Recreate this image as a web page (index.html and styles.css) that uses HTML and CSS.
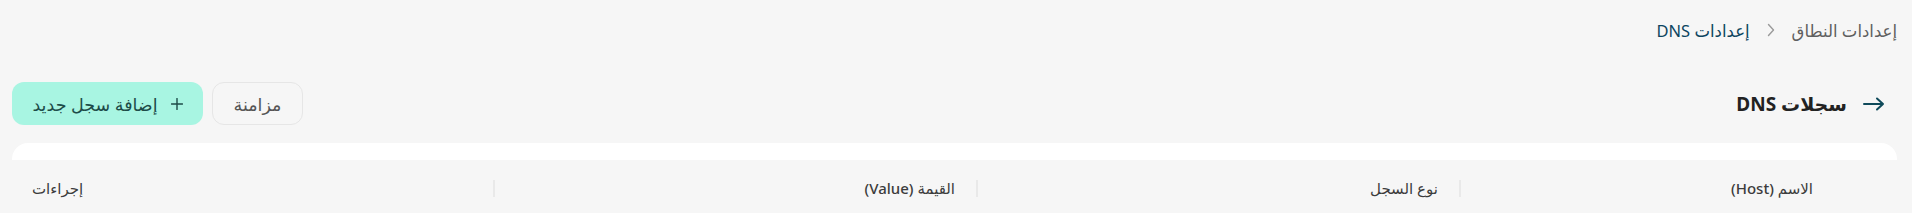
FILE: index.html
```html
<!DOCTYPE html>
<html lang="ar" dir="rtl">
<head>
<meta charset="utf-8">
<title>سجلات DNS</title>
<link rel="stylesheet" href="styles.css">
</head>
<body>
<div class="page">
  <nav class="breadcrumb">
    <span class="crumb">إعدادات النطاق</span>
    <svg class="sep" width="8" height="14" viewBox="0 0 8 14"><path d="M1.5 1.5 L6.5 7 L1.5 12.5" fill="none" stroke="#9a9a9a" stroke-width="1.4" stroke-linecap="round" stroke-linejoin="round"/></svg>
    <span class="crumb current">إعدادات DNS</span>
  </nav>

  <div class="title-row">
    <div class="title">
      <svg class="back" width="22" height="14" viewBox="0 0 22 14"><path d="M1 7 H20 M14 1.5 L20 7 L14 12.5" fill="none" stroke="#0f4a5a" stroke-width="2" stroke-linecap="round" stroke-linejoin="round"/></svg>
      <h1>سجلات DNS</h1>
    </div>
    <div class="actions">
      <button class="btn btn-sync">مزامنة</button>
      <button class="btn btn-add">
        <svg width="12" height="12" viewBox="0 0 12 12"><path d="M6 0.5 V11.5 M0.5 6 H11.5" stroke="#1d4b48" stroke-width="1.4" stroke-linecap="round"/></svg>
        <span>إضافة سجل جديد</span>
      </button>
    </div>
  </div>

  <div class="card">
    <div class="thead">
      <div class="th th-select"></div>
      <div class="th th-host">الاسم (Host)</div>
      <div class="th sepd">نوع السجل</div>
      <div class="th sepd">القيمة (Value)</div>
      <div class="th sepd th-actions">إجراءات</div>
    </div>
  </div>
</div>
</body>
</html>
```
FILE: styles.css
```css
* { box-sizing: border-box; }
html, body {
  margin: 0;
  background: #f6f6f6;
  font-family: "Noto Sans", "DejaVu Sans", sans-serif;
  color: #333;
}
.page {
  padding: 0 15px 0 12px;
}
.breadcrumb {
  display: flex;
  align-items: center;
  gap: 17px;
  height: 20px;
  margin-top: 20px;
  font-size: 16.5px;
}
.crumb { color: #5f5f5f; }
.crumb.current { color: #0d4560; }
.sep { display: block; }

.title-row {
  display: flex;
  justify-content: space-between;
  align-items: center;
  height: 43px;
  margin-top: 42px;
}
.title {
  display: flex;
  align-items: center;
  gap: 16px;
  padding-right: 12px;
}
.title h1 {
  margin: 0;
  font-size: 19px;
  font-weight: 700;
  color: #222;
}
.back { display: block; }
.actions {
  display: flex;
  gap: 9px;
  height: 43px;
}
.btn {
  font-family: inherit;
  font-size: 17.5px;
  border-radius: 12px;
  height: 43px;
  display: flex;
  align-items: center;
  cursor: pointer;
}
.btn-sync {
  width: 91px;
  justify-content: center;
  background: transparent;
  border: 1px solid #e6e6e6;
  color: #555;
}
.btn-add {
  width: 191px;
  justify-content: center;
  gap: 13px;
  background: #a8f5e2;
  border: none;
  color: #1d4b48;
}
.btn-add svg { display: block; }

.card {
  margin-top: 18px;
  background: #fff;
  border-radius: 16px 16px 0 0;
  padding-top: 17px;
}
.thead {
  display: grid;
  grid-template-columns: 61px 375px 483px 483px 1fr;
  background: #f6f6f6;
  height: 56px;
}
.th {
  position: relative;
  display: flex;
  align-items: center;
  padding: 0 23px;
  font-size: 15px;
  font-weight: 500;
  color: #3c3c3c;
}
.th-select { padding: 0; }
.sepd::before {
  content: "";
  position: absolute;
  right: 0;
  top: 20px;
  width: 2px;
  height: 17px;
  background: #e9e9e9;
}
.th-actions {
  justify-content: flex-end;
  padding-left: 20px;
}
```
